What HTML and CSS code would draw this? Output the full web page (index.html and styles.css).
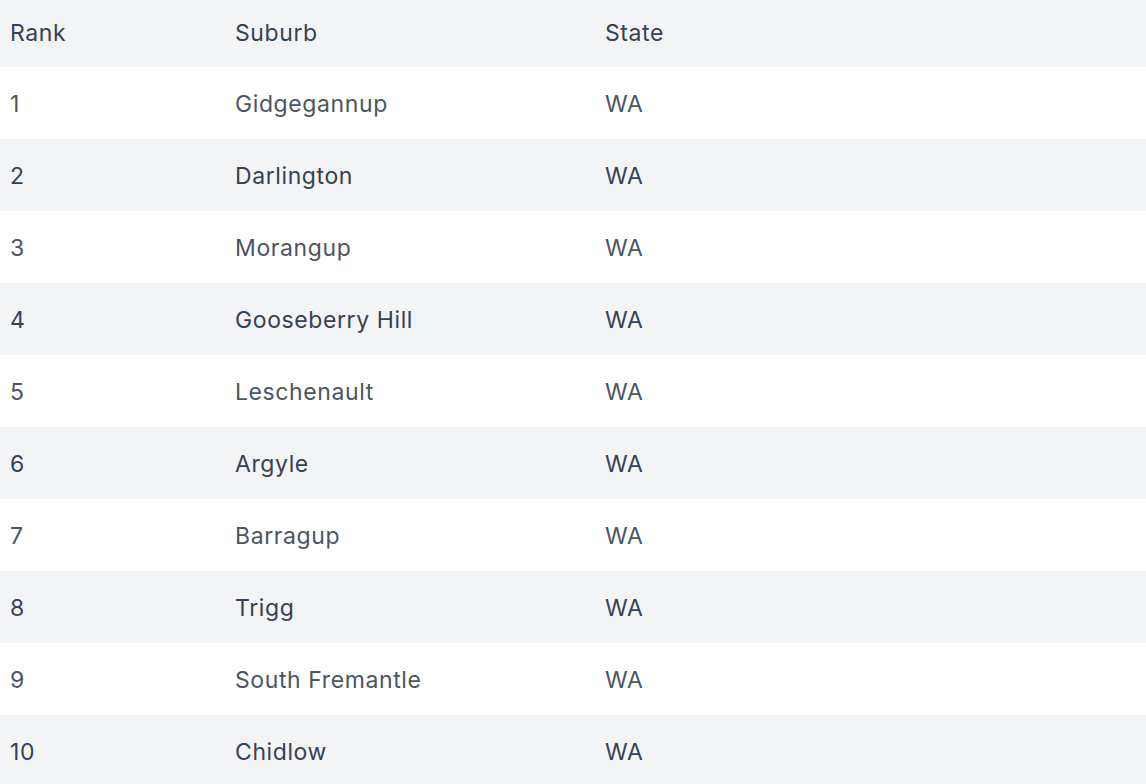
FILE: index.html
```html
<!DOCTYPE html>
<html>
<head>
<meta charset="utf-8">
<link rel="stylesheet" href="styles.css">
</head>
<body>
<table class="ranking">
  <thead>
    <tr class="head-row"><th class="col-rank">Rank</th><th class="col-suburb">Suburb</th><th class="col-state">State</th></tr>
  </thead>
  <tbody>
    <tr><td>1</td><td>Gidgegannup</td><td>WA</td></tr>
    <tr><td>2</td><td>Darlington</td><td>WA</td></tr>
    <tr><td>3</td><td>Morangup</td><td>WA</td></tr>
    <tr><td>4</td><td>Gooseberry Hill</td><td>WA</td></tr>
    <tr><td>5</td><td>Leschenault</td><td>WA</td></tr>
    <tr><td>6</td><td>Argyle</td><td>WA</td></tr>
    <tr><td>7</td><td>Barragup</td><td>WA</td></tr>
    <tr><td>8</td><td>Trigg</td><td>WA</td></tr>
    <tr><td>9</td><td>South Fremantle</td><td>WA</td></tr>
    <tr><td>10</td><td>Chidlow</td><td>WA</td></tr>
  </tbody>
</table>
</body>
</html>
```
FILE: styles.css
```css
html, body {
  margin: 0;
  padding: 0;
  background: #ffffff;
}
.ranking {
  width: 100%;
  border-collapse: collapse;
  font-family: Inter, "Liberation Sans", sans-serif;
  font-size: 23px;
  letter-spacing: 0.6px;
  table-layout: fixed;
}
.ranking th, .ranking td {
  text-align: left;
  padding: 0 10px;
  font-weight: 400;
}
.ranking th {
  padding-bottom: 1px;
}
.ranking td {
  padding-top: 1px;
}
.col-rank { width: 205px; }
.col-suburb { width: 350px; }
.head-row {
  background: #f3f4f6;
  height: 67px;
  color: #374151;
}
.ranking tbody tr {
  height: 72px;
  color: #4b5563;
}
.ranking tbody tr:nth-child(even) {
  background: #f3f4f6;
  color: #374151;
}
```
